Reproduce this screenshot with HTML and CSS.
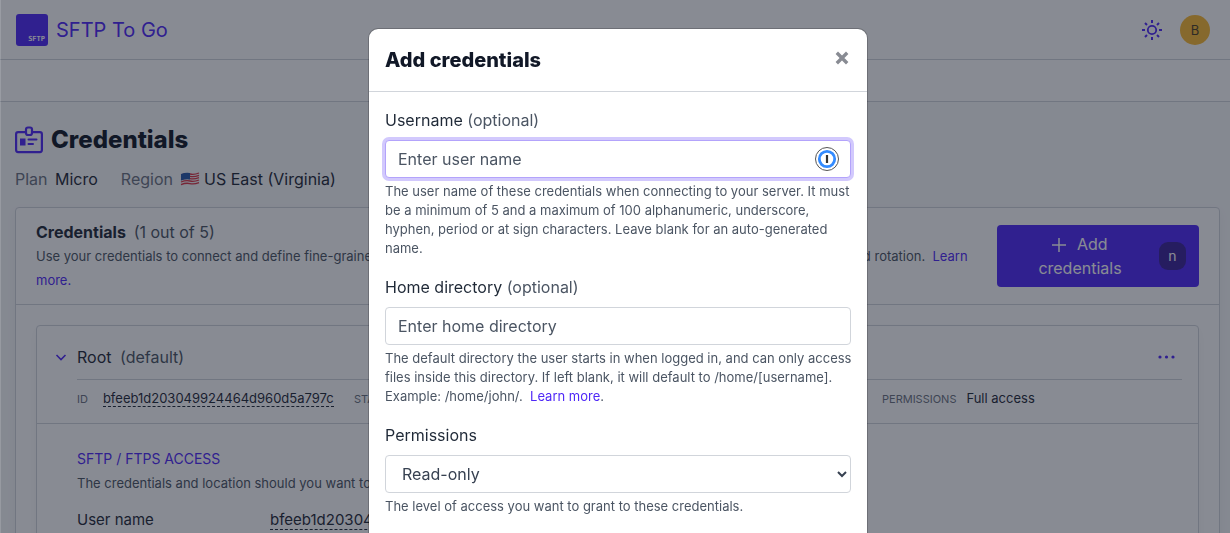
FILE: index.html
```html
<!DOCTYPE html>
<html lang="en">
<head>
    <meta charset="UTF-8">
    <meta name="viewport" content="width=device-width, initial-scale=1.0">
    <title>SFTP To Go - Credentials</title>
    <link rel="stylesheet" href="styles.css">
</head>
<body>
    <header class="topbar">
        <a class="brand" href="#"><span class="logo">SFTP</span>SFTP To Go</a>
        <div class="topbar-actions">
            <button type="button" class="icon-btn" aria-label="Switch theme">
                <svg width="20" height="20" viewBox="0 0 20 20" fill="none" stroke="currentColor" stroke-width="2">
                    <circle cx="10" cy="10" r="4.2" stroke-width="1.8"/>
                    <path d="M10 0v3M10 17v3M0 10h3M17 10h3M3 3l2 2M15 15l2 2M3 17l2-2M15 5l2-2"/>
                </svg>
            </button>
            <button type="button" class="avatar">B</button>
        </div>
    </header>
    <nav class="subbar"></nav>

    <main class="content">
        <h1 class="page-title">
            <svg width="28" height="28" viewBox="0 0 28 28" fill="none" stroke="currentColor" stroke-width="2.2" stroke-linejoin="round">
                <path d="M10 6.200H3.100a2 2 0 0 0-2 2v15.900a2 2 0 0 0 2 2h21.800a2 2 0 0 0 2-2V8.200a2 2 0 0 0-2-2H18"/>
                <rect x="11" y="1.500" width="6" height="7.500" rx="2"/>
                <path d="M13.500 13.500h8M13.500 18h4.500" stroke-linecap="round" stroke-width="2"/>
                <rect x="5" y="12.500" width="5.500" height="7" fill="currentColor" stroke="none"/>
            </svg>
            Credentials
        </h1>
        <div class="summary">
            <div><span class="muted">Plan</span> Micro</div>
            <div class="region">
                <span class="muted">Region</span>
                <svg class="flag" width="20" height="14" viewBox="0 0 20 14">
                    <path d="M1 2q5-2 9-1t9-1v12q-5 2-9 1t-9 1z" fill="#f3f4f6"/>
                    <path d="M1 3q5-2 9-1t9-1M1 5.300q5-2 9-1t9-1M1 7.600q5-2 9-1t9-1M1 10q5-2 9-1t9-1M1 12.600q5-2 9-1t9-1" fill="none" stroke="#dc3545" stroke-width="1.300"/>
                    <path d="M1 2q5-2 9-1v6.500q-4-1-9 1z" fill="#2858a8"/>
                </svg>
                US East (Virginia)
            </div>
        </div>

        <section class="card">
            <div class="card-header">
                <div class="card-intro">
                    <h2>Credentials <span class="count">(1 out of 5)</span></h2>
                    <p>Use your credentials to connect and define fine-grained access to files and directories on your server, with safe access key sharing and rotation.&nbsp; <a href="#">Learn more.</a></p>
                </div>
                <button type="button" class="add-btn">
                    <span class="add-label">
                        <svg width="14" height="14" viewBox="0 0 14 14" stroke="currentColor" stroke-width="1.500"><path d="M7 0v14M0 7h14"/></svg>
                        Add credentials
                    </span>
                    <kbd>n</kbd>
                </button>
            </div>
            <div class="card-body">
                <article class="credential">
                    <div class="credential-header">
                        <div class="credential-title">
                            <button type="button" class="icon-btn" aria-label="Collapse">
                                <svg width="12" height="8" viewBox="0 0 12 8" fill="none" stroke="currentColor" stroke-width="1.600"><path d="M1.500 2l4.500 4.500L10.500 2"/></svg>
                            </button>
                            <h3>Root <span class="count">(default)</span></h3>
                            <button type="button" class="icon-btn menu-btn" aria-label="More actions">
                                <svg width="18" height="4" viewBox="0 0 18 4" fill="currentColor"><circle cx="2" cy="2" r="1.600"/><circle cx="8.500" cy="2" r="1.600"/><circle cx="15" cy="2" r="1.600"/></svg>
                            </button>
                        </div>
                        <div class="details">
                            <div class="id-detail"><span class="detail-label">ID</span><span class="copyable">bfeeb1d203049924464d960d5a797c</span></div>
                            <div><span class="detail-label">STATUS</span>Active</div>
                            <div><span class="detail-label">PERMISSIONS</span>Full access</div>
                        </div>
                    </div>
                    <div class="access">
                        <h4>SFTP / FTPS ACCESS</h4>
                        <p>The credentials and location should you want to use SFTP or FTPS.</p>
                        <div class="access-row">
                            <span>User name</span>
                            <span><span class="copyable">bfeeb1d203049924464d960d5a797c</span></span>
                        </div>
                    </div>
                </article>
            </div>
        </section>
    </main>

    <div class="backdrop">
        <form class="modal" role="dialog" aria-labelledby="modal-title">
            <div class="modal-header">
                <h2 id="modal-title">Add credentials</h2>
                <button type="button" class="close-btn" aria-label="Close">
                    <svg width="14" height="14" viewBox="0 0 14 14" stroke="currentColor" stroke-width="3.400"><path d="M1.800 1.800l10.400 10.400M12.200 1.800L1.800 12.200"/></svg>
                </button>
            </div>
            <div class="modal-body">
                <div class="form-group">
                    <label for="username">Username <span class="optional">(optional)</span></label>
                    <div class="input-wrap active">
                        <input type="text" id="username" placeholder="Enter user name">
                        <svg width="24" height="24" viewBox="0 0 24 24" fill="none">
                            <circle cx="12" cy="12" r="11.500" fill="#fff" stroke="#555"/>
                            <circle cx="12" cy="12" r="7.700" stroke="#338bff" stroke-width="2.800"/>
                            <path d="M12 8v8" stroke="#333" stroke-width="2.200"/>
                        </svg>
                    </div>
                    <p class="help">The user name of these credentials when connecting to your server. It must be a minimum of 5 and a maximum of 100 alphanumeric, underscore, hyphen, period or at sign characters. Leave blank for an auto-generated name.</p>
                </div>
                <div class="form-group">
                    <label for="home">Home directory <span class="optional">(optional)</span></label>
                    <div class="input-wrap">
                        <input type="text" id="home" placeholder="Enter home directory">
                    </div>
                    <p class="help">The default directory the user starts in when logged in, and can only access files inside this directory. If left blank, it will default to /home/[username]. Example: /home/john/.&nbsp; <a href="#">Learn more</a>.</p>
                </div>
                <div class="form-group">
                    <label for="permissions">Permissions</label>
                    <select id="permissions">
                        <option>Read-only</option>
                        <option>Full access</option>
                    </select>
                    <p class="help">The level of access you want to grant to these credentials.</p>
                </div>
            </div>
        </form>
    </div>
</body>
</html>
```
FILE: styles.css
```css
* {
    box-sizing: border-box;
}
body {
    margin: 0;
    height: 100vh;
    overflow: hidden;
    font-family: Inter, sans-serif;
    font-size: 16px;
    line-height: 24px;
    color: #1f2937;
    background: #f9fafb;
}
h1, h2, h3, h4, p {
    margin: 0;
}
a {
    color: #4f28f7;
    text-decoration: none;
}
button {
    font: inherit;
    border: none;
    cursor: pointer;
}
svg {
    flex: none;
}
.topbar {
    display: flex;
    align-items: center;
    justify-content: space-between;
    height: 60px;
    padding: 0 20px 0 16px;
    background: #fff;
    border-bottom: 1px solid #d1d5db;
}
.brand {
    display: flex;
    align-items: center;
    gap: 8px;
    font-size: 20px;
}
.logo {
    display: flex;
    align-items: flex-end;
    justify-content: flex-end;
    width: 32px;
    height: 32px;
    padding: 3px;
    border-radius: 3px;
    background: #4f28f7;
    color: #fff;
    font-family: "DejaVu Sans Mono", monospace;
    font-size: 7px;
    font-weight: 700;
    line-height: 8px;
}
.topbar-actions {
    display: flex;
    align-items: center;
    gap: 18px;
}
.icon-btn {
    display: flex;
    padding: 0;
    background: none;
    color: #4f28f7;
}
.avatar {
    width: 30px;
    height: 30px;
    padding: 0;
    border-radius: 50%;
    background: #fbba32;
    color: #4b4026;
    font-size: 13px;
}
.subbar {
    height: 42px;
    background: #fff;
    border-bottom: 1px solid #d1d5db;
}
.content {
    padding: 22px 10px 0 15px;
}
.page-title {
    display: flex;
    align-items: center;
    gap: 8px;
    font-size: 24px;
    font-weight: 800;
    line-height: 32px;
    color: #111827;
}
.page-title svg {
    color: #4f28f7;
}
.summary {
    display: flex;
    gap: 23px;
    margin: 11px 0 16px;
}
.muted {
    color: #6b7280;
    margin-right: 3px;
}
.region {
    display: flex;
    align-items: center;
    gap: 4px;
}
.card, .credential {
    background: #fff;
    border: 1px solid #d1d5db;
    border-radius: 4px;
    box-shadow: 0 4px 12px rgba(0, 0, 0, 0.04);
}
.card-header {
    display: flex;
    align-items: center;
    gap: 18px;
    padding: 12px 20px;
    border-bottom: 1px solid #d1d5db;
}
.card-intro {
    flex: 1;
}
.card-intro h2, .credential h3 {
    font-size: 16px;
}
.card-intro p {
    font-size: 13px;
    color: #4b5563;
}
.count {
    margin-left: 4px;
    font-weight: 400;
    color: #4b5563;
}
.add-btn {
    display: flex;
    align-items: center;
    gap: 8px;
    width: 202px;
    padding: 7px 13px 7px 12px;
    border-radius: 4px;
    background: #4f28f7;
    color: #fff;
}
.add-label {
    flex: 1;
    padding: 0 24px;
}
.add-label svg {
    margin-right: 6px;
    vertical-align: -2px;
}
kbd {
    width: 27px;
    height: 28px;
    border-radius: 9px;
    background: #3a2399;
    font-family: inherit;
    font-size: 14px;
    line-height: 28px;
}
.card-body {
    padding: 20px;
}
.credential-header {
    padding: 19px 16px 12px 18px;
    border-bottom: 1px solid #d1d5db;
}
.credential-title {
    display: flex;
    align-items: center;
    gap: 10px;
}
.credential h3 {
    font-weight: 400;
}
.menu-btn {
    margin-left: auto;
    margin-right: 6px;
}
.details {
    display: grid;
    grid-template-columns: 277fr 528fr 300fr;
    margin: 10px 0 0 22px;
    padding-top: 6px;
    border-top: 1px solid #d1d5db;
    font-size: 13px;
}
.detail-label {
    margin-right: 10px;
    font-size: 11px;
    color: #6b7280;
}
.id-detail .detail-label {
    margin-right: 15px;
}
.copyable {
    border-bottom: 1px dashed #1f2937;
}
.access {
    padding: 23px 16px 24px 40px;
}
.access h4 {
    font-size: 14px;
    font-weight: 400;
    color: #4f28f7;
}
.access p {
    font-size: 13px;
    color: #4b5563;
}
.access-row {
    display: grid;
    grid-template-columns: 193px 1fr;
    margin-top: 13px;
    font-size: 15px;
}
.backdrop {
    position: fixed;
    inset: 0;
    display: flex;
    justify-content: center;
    align-items: flex-start;
    padding: 28px 0 0 5px;
    overflow: hidden;
    border-left: 1px solid rgba(255, 255, 255, 0.15);
    background: rgba(17, 24, 39, 0.5);
}
.modal {
    width: 500px;
    max-width: 100%;
    border: 1px solid rgba(0, 0, 0, 0.2);
    border-radius: 10px;
    background: #fff;
    background-clip: padding-box;
}
.modal-header {
    display: flex;
    align-items: center;
    justify-content: space-between;
    height: 63px;
    padding: 0 18px 0 16px;
    border-bottom: 1px solid #d1d5db;
}
.modal-header h2 {
    font-size: 20px;
    font-weight: 800;
    color: #111827;
}
.close-btn {
    display: flex;
    padding: 0 0 4px;
    background: none;
    color: #888b93;
}
.modal-body {
    padding: 16px 16px 48px;
}
.form-group {
    margin-bottom: 17px;
}
label {
    display: block;
    margin-bottom: 8px;
}
.optional {
    color: #4b5563;
}
.input-wrap, select {
    width: 100%;
    height: 38px;
    border: 1px solid #d1d5db;
    border-radius: 4px;
    background: #fff;
}
.input-wrap {
    display: flex;
    align-items: center;
    padding: 0 11px 0 12px;
}
.input-wrap.active {
    border-color: #b3a3fb;
    box-shadow: 0 0 0 3px #d2c9fd;
}
input {
    flex: 1;
    min-width: 0;
    padding: 0;
    border: none;
    outline: none;
    background: none;
    font: inherit;
}
input::placeholder {
    color: #4b5563;
    opacity: 1;
}
select {
    display: block;
    padding: 0 0 0 12px;
    font: inherit;
    color: #374151;
}
.help {
    margin: 4px -8px 0 0;
    font-size: 13px;
    line-height: 19px;
    color: #4b5563;
}
```
